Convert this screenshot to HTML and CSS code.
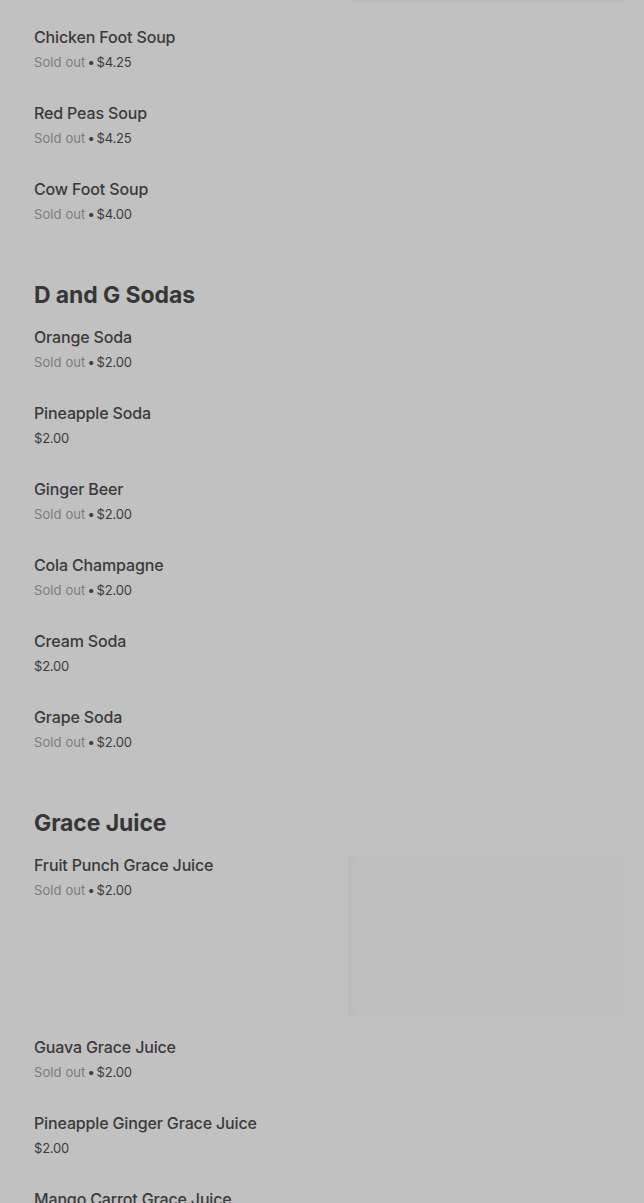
FILE: index.html
```html
<!DOCTYPE html>
<html lang="en">
<head>
  <meta charset="UTF-8">
  <title>Menu</title>
  <link rel="stylesheet" href="styles.css">
</head>
<body>

<div class="menu">

  <!-- tail of previous section -->
  <div class="top-photo"></div>

  <section class="menu-section">
    <div class="item">
      <div class="item-text">
        <div class="item-name">Chicken Foot Soup</div>
        <div class="item-meta"><span class="sold">Sold out</span><span class="dot">•</span>$4.25</div>
      </div>
    </div>
    <div class="item">
      <div class="item-text">
        <div class="item-name">Red Peas Soup</div>
        <div class="item-meta"><span class="sold">Sold out</span><span class="dot">•</span>$4.25</div>
      </div>
    </div>
    <div class="item">
      <div class="item-text">
        <div class="item-name">Cow Foot Soup</div>
        <div class="item-meta"><span class="sold">Sold out</span><span class="dot">•</span>$4.00</div>
      </div>
    </div>
  </section>

  <section class="menu-section">
    <h2>D and G Sodas</h2>
    <div class="item">
      <div class="item-text">
        <div class="item-name">Orange Soda</div>
        <div class="item-meta"><span class="sold">Sold out</span><span class="dot">•</span>$2.00</div>
      </div>
    </div>
    <div class="item">
      <div class="item-text">
        <div class="item-name">Pineapple Soda</div>
        <div class="item-meta">$2.00</div>
      </div>
    </div>
    <div class="item">
      <div class="item-text">
        <div class="item-name">Ginger Beer</div>
        <div class="item-meta"><span class="sold">Sold out</span><span class="dot">•</span>$2.00</div>
      </div>
    </div>
    <div class="item">
      <div class="item-text">
        <div class="item-name">Cola Champagne</div>
        <div class="item-meta"><span class="sold">Sold out</span><span class="dot">•</span>$2.00</div>
      </div>
    </div>
    <div class="item">
      <div class="item-text">
        <div class="item-name">Cream Soda</div>
        <div class="item-meta">$2.00</div>
      </div>
    </div>
    <div class="item">
      <div class="item-text">
        <div class="item-name">Grape Soda</div>
        <div class="item-meta"><span class="sold">Sold out</span><span class="dot">•</span>$2.00</div>
      </div>
    </div>
  </section>

  <section class="menu-section">
    <h2>Grace Juice</h2>
    <div class="item has-photo">
      <div class="item-text">
        <div class="item-name">Fruit Punch Grace Juice</div>
        <div class="item-meta"><span class="sold">Sold out</span><span class="dot">•</span>$2.00</div>
      </div>
      <div class="item-photo"></div>
    </div>
    <div class="item">
      <div class="item-text">
        <div class="item-name">Guava Grace Juice</div>
        <div class="item-meta"><span class="sold">Sold out</span><span class="dot">•</span>$2.00</div>
      </div>
    </div>
    <div class="item">
      <div class="item-text">
        <div class="item-name">Pineapple Ginger Grace Juice</div>
        <div class="item-meta">$2.00</div>
      </div>
    </div>
    <div class="item">
      <div class="item-text">
        <div class="item-name">Mango Carrot Grace Juice</div>
        <div class="item-meta"><span class="sold">Sold out</span><span class="dot">•</span>$2.00</div>
      </div>
    </div>
  </section>

</div>

</body>
</html>
```

FILE: styles.css
```css
body {
  margin: 0;
  font-family: Inter, "Noto Sans", Arial, sans-serif;
  background: #c1c1c1;
  color: #3a3a3a;
  overflow: hidden;
}

.menu {
  padding: 0 20px 0 34px;
}

.top-photo {
  margin-left: 318px;
  height: 3px;
  background: #bcbcbc;
  border-radius: 0 0 6px 6px;
  margin-bottom: 24px;
}

.menu-section + .menu-section {
  margin-top: 24px;
}

.menu-section h2 {
  margin: 0 0 16px;
  font-size: 23px;
  line-height: 32px;
  font-weight: 700;
  letter-spacing: -0.1px;
  color: #363636;
}

.item {
  display: flex;
  align-items: flex-start;
  padding-bottom: 31px;
}

.item.has-photo {
  padding-bottom: 21px;
}

.item-text {
  flex: 1;
}

.item-name {
  font-size: 16px;
  line-height: 20px;
  font-weight: 500;
  letter-spacing: -0.15px;
  color: #3a3a3a;
}

.item-meta {
  margin-top: 5px;
  font-size: 13px;
  line-height: 20px;
  color: #3c3c3c;
  letter-spacing: -0.2px;
}

.item-meta .sold {
  color: #7b7b7b;
  letter-spacing: 0.1px;
}

.item-meta .dot {
  margin: 0 2px;
  color: #3c3c3c;
}

.item-photo {
  width: 276px;
  height: 160px;
  margin-top: 1px;
  background: #bfbfbf;
  border-radius: 4px;
  box-shadow: inset 6px 0 6px -4px rgba(0, 0, 0, 0.04);
}
```
